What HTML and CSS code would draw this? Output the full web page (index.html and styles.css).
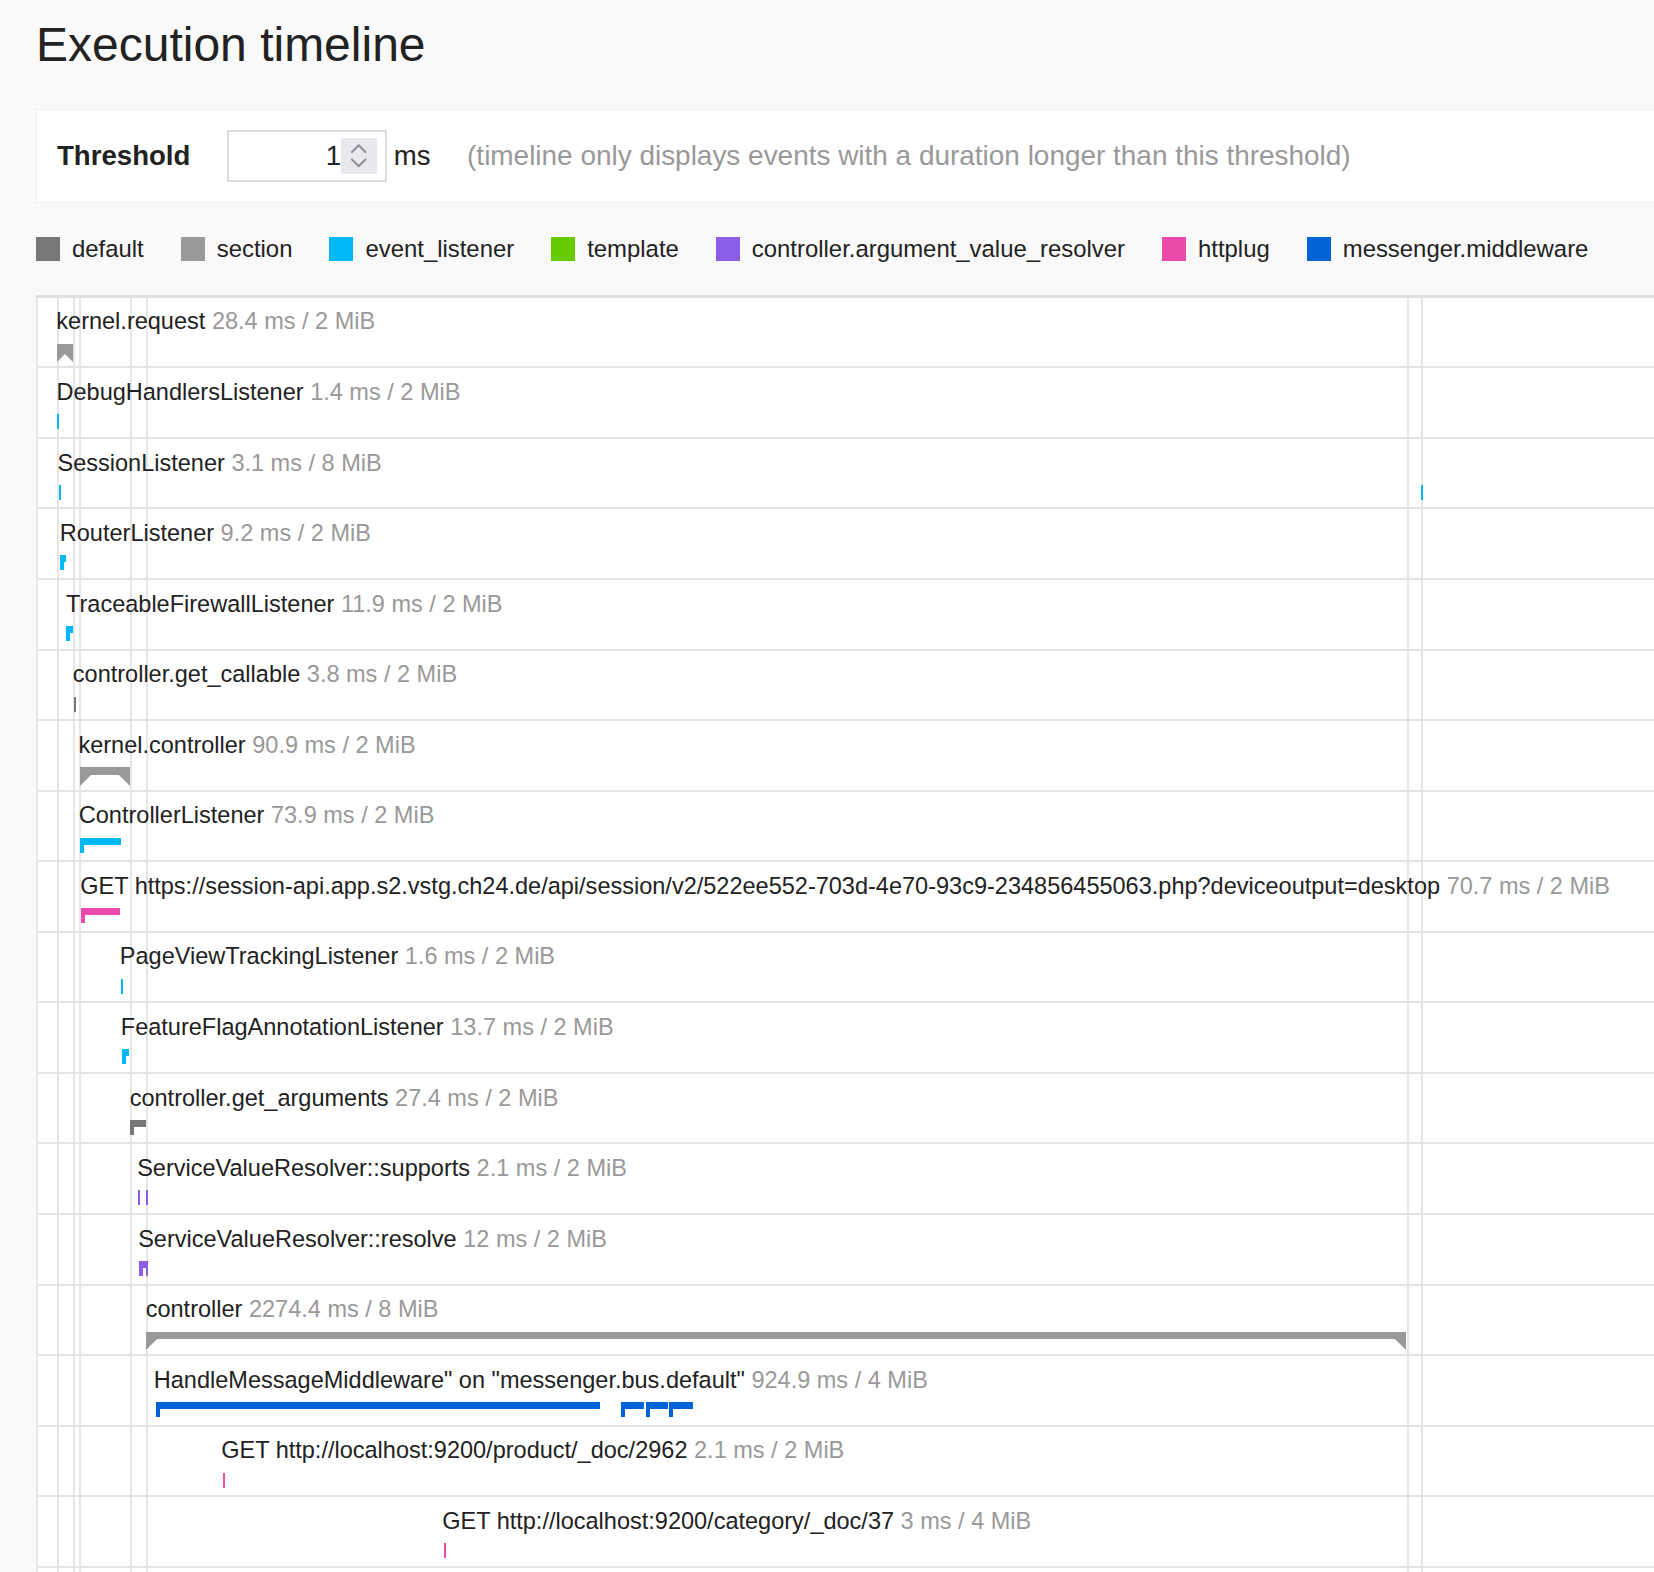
FILE: index.html
```html
<!DOCTYPE html>
<html lang="en">
<head>
  <meta charset="UTF-8">
  <meta name="viewport" content="width=device-width, initial-scale=1.0">
  <title>Execution timeline</title>
  <link rel="stylesheet" href="styles.css">
</head>
<body>
<div class="page">

  <h1>Execution timeline</h1>

  <!-- Threshold -->
  <div class="threshold">
    <span class="threshold-label">Threshold</span>
    <div class="threshold-input">
      <span class="threshold-value">1</span>
      <span class="spinner">
        <svg width="36" height="36" viewBox="0 0 36 36">
          <path d="M11 14 L17.7 7.2 L24.4 14"/>
          <path d="M11 21.5 L17.7 28.3 L24.4 21.5"/>
        </svg>
      </span>
    </div>
    <span class="unit">ms</span>
    <span class="hint">(timeline only displays events with a duration longer than this threshold)</span>
  </div>

  <!-- Legend -->
  <ul class="legend">
    <li><span class="swatch c-default"></span>default</li>
    <li><span class="swatch c-section"></span>section</li>
    <li><span class="swatch c-event"></span>event_listener</li>
    <li><span class="swatch c-template"></span>template</li>
    <li><span class="swatch c-resolver"></span>controller.argument_value_resolver</li>
    <li><span class="swatch c-httplug"></span>httplug</li>
    <li><span class="swatch c-messenger"></span>messenger.middleware</li>
  </ul>

  <!-- Timeline -->
  <div class="timeline">
    <div class="grid-line" style="left: 19.3px"></div>
    <div class="grid-line" style="left: 35.3px"></div>
    <div class="grid-line" style="left: 41px"></div>
    <div class="grid-line" style="left: 92px"></div>
    <div class="grid-line" style="left: 108px"></div>
    <div class="grid-line" style="left: 1368.5px"></div>
    <div class="grid-line" style="left: 1383px"></div>

    <div class="row">
      <div class="label" style="left: 19.3px"><span class="name">kernel.request</span> <span class="meta">28.4 ms / 2 MiB</span></div>
      <div class="section c-section" style="left: 19.3px; width: 16px"></div>
    </div>

    <div class="row">
      <div class="label" style="left: 19.5px"><span class="name">DebugHandlersListener</span> <span class="meta">1.4 ms / 2 MiB</span></div>
      <div class="tick c-event" style="left: 19.3px"></div>
    </div>

    <div class="row">
      <div class="label" style="left: 20.5px"><span class="name">SessionListener</span> <span class="meta">3.1 ms / 8 MiB</span></div>
      <div class="tick c-event" style="left: 21px"></div>
      <div class="tick c-event" style="left: 1383px"></div>
    </div>

    <div class="row">
      <div class="label" style="left: 22.8px"><span class="name">RouterListener</span> <span class="meta">9.2 ms / 2 MiB</span></div>
      <div class="bar c-event" style="left: 22.3px; width: 5.4px"></div>
    </div>

    <div class="row">
      <div class="label" style="left: 29px"><span class="name">TraceableFirewallListener</span> <span class="meta">11.9 ms / 2 MiB</span></div>
      <div class="bar c-event" style="left: 27.7px; width: 7.3px"></div>
    </div>

    <div class="row">
      <div class="label" style="left: 35.8px"><span class="name">controller.get_callable</span> <span class="meta">3.8 ms / 2 MiB</span></div>
      <div class="tick c-default" style="left: 35.5px"></div>
    </div>

    <div class="row">
      <div class="label" style="left: 41.4px"><span class="name">kernel.controller</span> <span class="meta">90.9 ms / 2 MiB</span></div>
      <div class="section c-section" style="left: 42px; width: 50px"></div>
    </div>

    <div class="row">
      <div class="label" style="left: 41.8px"><span class="name">ControllerListener</span> <span class="meta">73.9 ms / 2 MiB</span></div>
      <div class="bar c-event" style="left: 42px; width: 40.7px"></div>
    </div>

    <div class="row">
      <div class="label" style="left: 43.2px"><span class="name">GET https://session-api.app.s2.vstg.ch24.de/api/session/v2/522ee552-703d-4e70-93c9-234856455063.php?deviceoutput=desktop</span> <span class="meta">70.7 ms / 2 MiB</span></div>
      <div class="bar c-httplug" style="left: 42.7px; width: 39px"></div>
    </div>

    <div class="row">
      <div class="label" style="left: 82.8px"><span class="name">PageViewTrackingListener</span> <span class="meta">1.6 ms / 2 MiB</span></div>
      <div class="tick c-event" style="left: 82.7px"></div>
    </div>

    <div class="row">
      <div class="label" style="left: 83.8px"><span class="name">FeatureFlagAnnotationListener</span> <span class="meta">13.7 ms / 2 MiB</span></div>
      <div class="bar c-event" style="left: 83.7px; width: 7.3px"></div>
    </div>

    <div class="row">
      <div class="label" style="left: 92.7px"><span class="name">controller.get_arguments</span> <span class="meta">27.4 ms / 2 MiB</span></div>
      <div class="bar c-default" style="left: 92px; width: 15.7px"></div>
    </div>

    <div class="row">
      <div class="label" style="left: 100.2px"><span class="name">ServiceValueResolver::supports</span> <span class="meta">2.1 ms / 2 MiB</span></div>
      <div class="tick c-resolver" style="left: 99.7px"></div>
      <div class="tick c-resolver" style="left: 107.7px"></div>
    </div>

    <div class="row">
      <div class="label" style="left: 101.2px"><span class="name">ServiceValueResolver::resolve</span> <span class="meta">12 ms / 2 MiB</span></div>
      <div class="bar c-resolver" style="left: 100.7px; width: 7px"></div>
      <div class="tick c-resolver" style="left: 107.7px"></div>
    </div>

    <div class="row">
      <div class="label" style="left: 108.7px"><span class="name">controller</span> <span class="meta">2274.4 ms / 8 MiB</span></div>
      <div class="section c-section" style="left: 107.7px; width: 1260.8px"></div>
    </div>

    <div class="row">
      <div class="label" style="left: 116.8px"><span class="name">HandleMessageMiddleware" on "messenger.bus.default"</span> <span class="meta">924.9 ms / 4 MiB</span></div>
      <div class="bar c-messenger" style="left: 118px; width: 444px"></div>
      <div class="bar c-messenger" style="left: 582.7px; width: 23.3px"></div>
      <div class="bar c-messenger" style="left: 608px; width: 21.7px"></div>
      <div class="bar c-messenger" style="left: 631px; width: 23.7px"></div>
    </div>

    <div class="row">
      <div class="label" style="left: 184.2px"><span class="name">GET http://localhost:9200/product/_doc/2962</span> <span class="meta">2.1 ms / 2 MiB</span></div>
      <div class="tick c-httplug" style="left: 184.7px"></div>
    </div>

    <div class="row">
      <div class="label" style="left: 405.2px"><span class="name">GET http://localhost:9200/category/_doc/37</span> <span class="meta">3 ms / 4 MiB</span></div>
      <div class="tick c-httplug" style="left: 406px"></div>
    </div>
  </div>

</div>
</body>
</html>
```

FILE: styles.css
```css
html,
body {
  overflow: hidden;
}

body {
  margin: 0;
  background-color: #f9f9f9;
  color: #222;
  font-family: "Liberation Sans", Arial, Helvetica, sans-serif;
}

.page {
  width: 1720px;
  padding-left: 36px;
}

h1 {
  margin: 21.3px 0 40.5px;
  font-size: 48px;
  line-height: 47.5px;
  font-weight: normal;
  color: #222;
}

/* Couleurs des catégories */
.c-default   { --c: #777; }
.c-section   { --c: #999; }
.c-event     { --c: #00b8f5; }
.c-template  { --c: #66cc00; }
.c-resolver  { --c: #8c5de6; }
.c-httplug   { --c: #ea4aaa; }
.c-messenger { --c: #0064d6; }

/* Bloc threshold */
.threshold {
  display: flex;
  align-items: center;
  height: 93.4px;
  box-sizing: border-box;
  padding-left: 20px;
  background-color: #fff;
  border: 1px solid #eee;
  border-right: none;
  font-size: 27.6px;
  line-height: 1;
}

.threshold-label {
  font-weight: bold;
  color: #222;
}

.threshold-input {
  display: flex;
  align-items: center;
  justify-content: flex-end;
  box-sizing: border-box;
  width: 159.4px;
  height: 51.6px;
  margin-left: 37px;
  padding-right: 7.7px;
  background-color: #fff;
  border: 2px solid #ddd;
}

.threshold-value {
  color: #222;
}

.spinner {
  display: block;
  width: 36px;
  height: 35.7px;
  background-color: #e8e8ed;
}

.spinner svg {
  display: block;
}

.spinner path {
  fill: none;
  stroke: #8e8e9a;
  stroke-width: 2;
  stroke-linecap: round;
  stroke-linejoin: round;
}

.unit {
  margin-left: 7px;
  color: #222;
}

.hint {
  margin-left: 36.5px;
  font-size: 27.95px;
  color: #999;
}

/* Légende */
.legend {
  display: flex;
  gap: 37px;
  margin: 34px 0 0;
  padding: 0;
  list-style: none;
  font-size: 23.9px;
  line-height: 24px;
}

.legend li {
  display: flex;
  align-items: center;
  white-space: nowrap;
}

.swatch {
  display: block;
  width: 24px;
  height: 24px;
  margin-right: 12px;
  background-color: var(--c);
}

/* Timeline */
.timeline {
  position: relative;
  margin-top: 34px;
  padding-bottom: 60px;
  background-color: #fff;
  border-top: 3px solid #e0e0e0;
  border-left: 2px solid #e6e6e6;
}

.grid-line {
  position: absolute;
  top: 0;
  bottom: 0;
  width: 2px;
  background-color: #e6e6e6;
}

.row {
  position: relative;
  height: 68.57px;
  border-bottom: 2px solid #e4e4e4;
}

.label {
  position: absolute;
  top: 12.7px;
  margin-left: -1px;
  font-size: 23.52px;
  line-height: 1;
  white-space: nowrap;
}

.label .name {
  color: #222;
}

.label .meta {
  color: #999;
}

/* Périodes */
.bar {
  position: absolute;
  top: 46px;
  height: 7px;
  background-color: var(--c);
}

.bar::before {
  content: "";
  position: absolute;
  left: 0;
  top: 0;
  width: 4px;
  height: 15px;
  background-color: var(--c);
}

.tick {
  position: absolute;
  top: 46px;
  width: 2px;
  height: 15px;
  background-color: var(--c);
}

.section {
  position: absolute;
  top: 46px;
  height: 7.5px;
  background-color: var(--c);
}

.section::before,
.section::after {
  content: "";
  position: absolute;
  top: 7.5px;
  width: 0;
  height: 0;
  border-top: 11px solid var(--c);
}

.section::before {
  left: 0;
  border-right: 11px solid transparent;
}

.section::after {
  right: 0;
  border-left: 11px solid transparent;
}
```
